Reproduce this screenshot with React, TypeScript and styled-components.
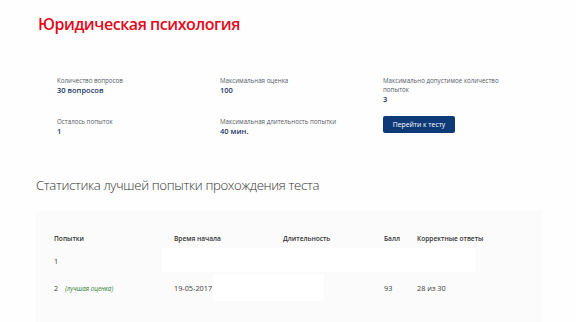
import React from 'react'
import styled, { createGlobalStyle } from 'styled-components'

const GlobalStyle = createGlobalStyle`
  html, body {
    margin: 0;
    padding: 0;
    background: #fefefe;
    font-family: 'Open Sans', 'Liberation Sans', sans-serif;
  }
`

type Info = { label: string; value: string }

const info: Info[] = [
  { label: 'Количество вопросов', value: '30 вопросов' },
  { label: 'Максимальная оценка', value: '100' },
  { label: 'Максимально допустимое количество попыток', value: '3' },
  { label: 'Осталось попыток', value: '1' },
  { label: 'Максимальная длительность попытки', value: '40 мин.' },
]

const headers = ['Попытки', 'Время начала', 'Длительность', 'Балл', 'Корректные ответы']

const App = () => (
  <Page>
    <GlobalStyle />
    <Title>Юридическая психология</Title>

    <InfoGrid>
      {info.map((item) => (
        <InfoItem key={item.label}>
          <Label>{item.label}</Label>
          <Value>{item.value}</Value>
        </InfoItem>
      ))}
      <InfoItem>
        <Button>Перейти к тесту</Button>
      </InfoItem>
    </InfoGrid>

    <Heading>Статистика лучшей попытки прохождения теста</Heading>

    <Panel>
      <Table>
        <thead>
          <tr>
            {headers.map((h) => (
              <Th key={h}>{h}</Th>
            ))}
          </tr>
        </thead>
        <tbody>
          <tr>
            <Td>1</Td>
            <Td colSpan={4}>
              <Mask $width={314} $height={24} $shift={-12} />
            </Td>
          </tr>
          <tr>
            <Td>
              2 <Best>(лучшая оценка)</Best>
            </Td>
            <Td colSpan={2}>
              <DateWrap>
                19-05-2017 <Mask $width={111} $height={27} $shift={1} />
              </DateWrap>
            </Td>
            <Td>93</Td>
            <Td>28 из 30</Td>
          </tr>
        </tbody>
      </Table>
    </Panel>
  </Page>
)

export default App

const Page = styled.div`
  width: 576px;
  height: 322px;
  padding: 14px 0 0 38px;
  box-sizing: border-box;
  overflow: hidden;
`

const Title = styled.h1`
  margin: 0;
  font-size: 16px;
  font-weight: 600;
  line-height: 20px;
  color: #e10a1d;
  letter-spacing: -0.45px;
`

const InfoGrid = styled.div`
  display: grid;
  grid-template-columns: 163px 163px 130px;
  row-gap: 13px;
  margin: 42px 0 0 19px;
`

const InfoItem = styled.div`
  display: flex;
  flex-direction: column;
  justify-content: flex-start;
`

const Label = styled.span`
  font-size: 6.2px;
  line-height: 9px;
  color: #555a63;
`

const Value = styled.span`
  font-size: 7.5px;
  line-height: 10px;
  font-weight: 600;
  color: #1c3766;
`

const Button = styled.button`
  margin-top: -1px;
  width: 72px;
  height: 17px;
  border: none;
  border-radius: 2px;
  background: #0f3a78;
  color: #ffffff;
  font-family: inherit;
  font-size: 6.8px;
  padding: 0;
`

const Heading = styled.h2`
  margin: 40px 0 0 -2px;
  font-size: 13.2px;
  font-weight: 300;
  line-height: 18px;
  letter-spacing: -0.35px;
  color: #333333;
`

const Panel = styled.div`
  margin: 17px 0 0 -2px;
  width: 506px;
  background: #fbfbfb;
  padding: 17px 0 0 18px;
  box-sizing: border-box;
  height: 120px;
`

const Table = styled.table`
  border-collapse: collapse;
  color: #333;

  & td:nth-child(1), & th:nth-child(1) { width: 120px; }
`

const Th = styled.th`
  text-align: left;
  font-size: 6.6px;
  font-weight: 600;
  height: 20px;
  padding: 0;
  &:nth-child(2) { width: 109px; }
  &:nth-child(3) { width: 101px; }
  &:nth-child(4) { width: 33px; }
`

const Td = styled.td`
  height: 26px;
  padding: 0;
  font-size: 7.3px;
  color: #3a3a3a;
  vertical-align: middle;
`

const Best = styled.em`
  margin-left: 5px;
  color: #2e7d32;
  font-size: 6.3px;
`

const DateWrap = styled.div`
  display: flex;
  align-items: center;
`

const Mask = styled.span<{ $width: number; $height: number; $shift: number }>`
  display: inline-block;
  width: ${({ $width }) => $width}px;
  height: ${({ $height }) => $height}px;
  margin-left: ${({ $shift }) => $shift}px;
  background: #ffffff;
`
